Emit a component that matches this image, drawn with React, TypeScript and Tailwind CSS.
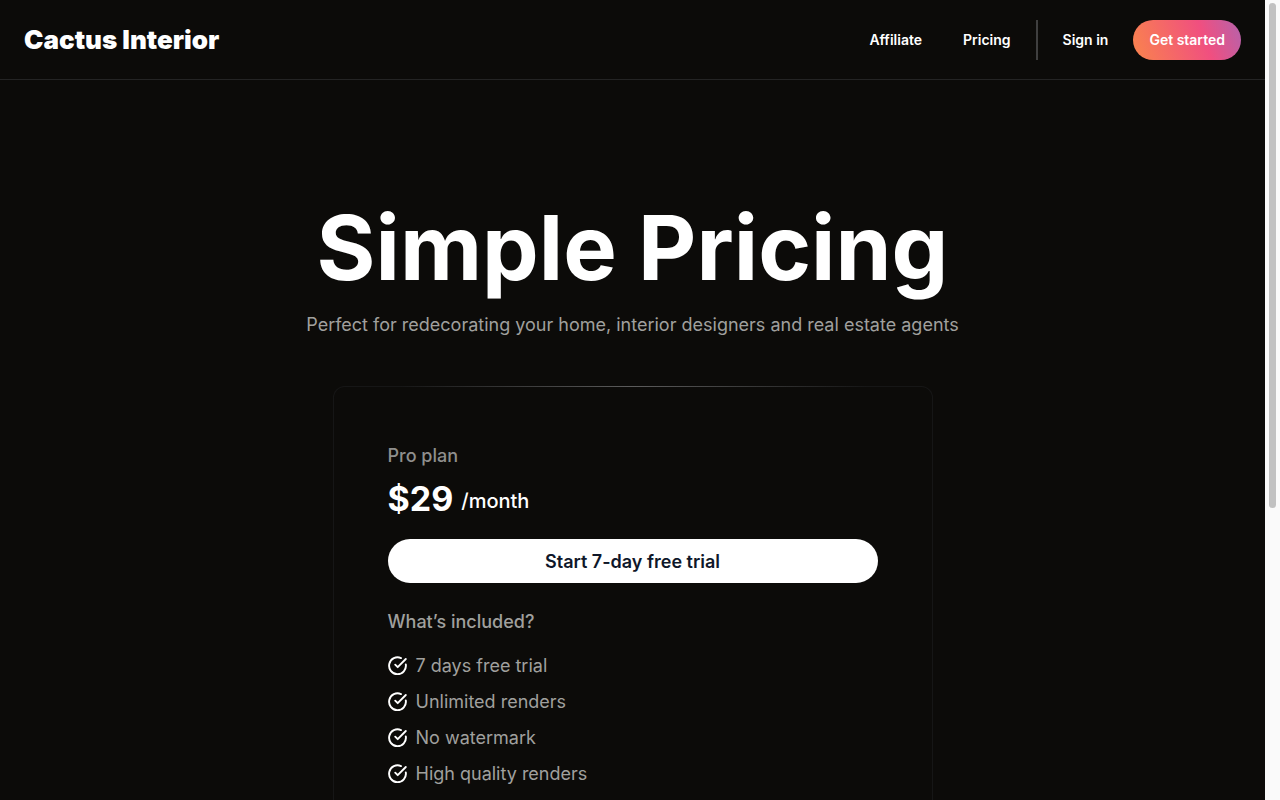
import React from "react";

const features = ["7 days free trial", "Unlimited renders", "No watermark", "High quality renders", ""];

function CheckIcon() {
  return (
    <svg className="size-5 shrink-0" viewBox="0 0 20 20" fill="none" stroke="currentColor" strokeWidth="1.9" strokeLinecap="round" strokeLinejoin="round" aria-hidden="true">
      <path d="M13 2.1A8.4 8.4 0 1 0 17.8 8.4" />
      <path d="M7.2 8.7L9.7 11.2L17.8 3" />
    </svg>
  );
}

function Header() {
  return (
    <header className="flex h-20 shrink-0 items-center justify-between border-b border-[#242424] px-6">
      <a href="#" className="text-[26px] font-black">Cactus Interior</a>
      <nav className="flex items-center gap-[25px] text-sm font-semibold">
        <a href="#affiliate" className="mr-4">Affiliate</a>
        <a href="#pricing">Pricing</a>
        <span className="h-10 w-0.5 bg-[#3f3f3f]" />
        <a href="#signin">Sign in</a>
        <a href="#start" className="flex h-10 items-center rounded-full bg-[linear-gradient(70deg,#f98050_5%,#f04f80_65%,#bd60a6_95%)] px-4">Get started</a>
      </nav>
    </header>
  );
}

function PlanCard() {
  return (
    <section className="w-full max-w-[600px] rounded-xl bg-[radial-gradient(ellipse_at_top,#5c5c5c,#161616_55%)] p-px">
      <div className="rounded-[11px] bg-[#0c0b09] px-[54px] py-[55px]">
        <h2 className="text-lg font-medium text-[#8f8f8d]">Pro plan</h2>
        <p className="mt-2 flex h-10 items-center gap-2">
          <span className="text-[34px] font-bold">$29</span>
          <span className="mt-1.5 text-xl font-medium">/month</span>
        </p>
        <button type="button" className="mt-[21px] h-11 w-full rounded-full bg-white pt-px text-lg font-semibold text-[#0f172a]">Start 7-day free trial</button>
        <h3 className="mt-[25px] text-lg font-medium text-[#a0a09e]">What’s included?</h3>
        <ul className="mt-4 flex flex-col gap-2">
          {features.map((feature) => (
            <li key={feature} className="flex h-7 items-center gap-2">
              <CheckIcon />
              {feature && <span className="text-lg text-[#a0a09e]">{feature}</span>}
            </li>
          ))}
        </ul>
      </div>
    </section>
  );
}

function ScrollBar() {
  return (
    <div className="w-[15px] shrink-0 bg-[#fafafa] px-1 py-[3px]" aria-hidden="true">
      <div className="h-[63.6%] rounded-full bg-[#c1c1c1]" />
    </div>
  );
}

export default function App() {
  return (
    <div className="flex h-screen overflow-hidden bg-[#0c0b09] font-[Inter,sans-serif] text-white">
      <div className="flex min-w-0 flex-1 flex-col overflow-hidden">
        <Header />
        <main className="flex flex-col items-center px-6 pt-[120px]">
          <h1 className="text-center text-[90px] font-bold leading-[96px]">Simple Pricing</h1>
          <p className="mt-[15px] text-center text-lg text-[#a0a09e]">Perfect for redecorating your home, interior designers and real estate agents</p>
          <div className="mt-[47px] flex w-full justify-center">
            <PlanCard />
          </div>
        </main>
      </div>
      <ScrollBar />
    </div>
  );
}
